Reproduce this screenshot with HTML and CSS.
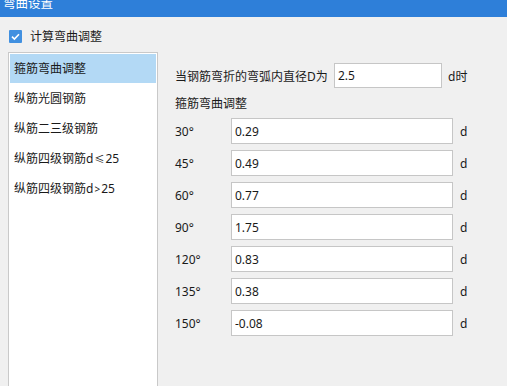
FILE: index.html
```html
<!DOCTYPE html>
<html>
<head>
<meta charset="utf-8">
<link rel="stylesheet" href="styles.css">
</head>
<body>
<div class="titlebar"><span class="title">弯曲设置</span></div>
<div class="check-row">
  <span class="checkbox"><svg width="13" height="13" viewBox="0 0 13 13"><path d="M3 6.6 L5.4 9 L10 4.2" fill="none" stroke="#fff" stroke-width="1.6"/></svg></span>
  <span class="check-label">计算弯曲调整</span>
</div>
<div class="main">
  <div class="list">
    <div class="item selected">箍筋弯曲调整</div>
    <div class="item">纵筋光圆钢筋</div>
    <div class="item">纵筋二三级钢筋</div>
    <div class="item">纵筋四级钢筋d<span class="op">≤</span>25</div>
    <div class="item">纵筋四级钢筋d<span class="op">&gt;</span>25</div>
  </div>
  <div class="panel">
    <div class="diam-row">
      <span class="diam-label">当钢筋弯折的弯弧内直径D为</span>
      <input class="field diam" value="2.5">
      <span class="unit">d时</span>
    </div>
    <div class="heading">箍筋弯曲调整</div>
    <div class="grid">
      <span class="angle">30°</span><input class="field" value="0.29"><span class="unit">d</span>
      <span class="angle">45°</span><input class="field" value="0.49"><span class="unit">d</span>
      <span class="angle">60°</span><input class="field" value="0.77"><span class="unit">d</span>
      <span class="angle">90°</span><input class="field" value="1.75"><span class="unit">d</span>
      <span class="angle">120°</span><input class="field" value="0.83"><span class="unit">d</span>
      <span class="angle">135°</span><input class="field" value="0.38"><span class="unit">d</span>
      <span class="angle">150°</span><input class="field" value="-0.08"><span class="unit">d</span>
    </div>
  </div>
</div>
</body>
</html>
```
FILE: styles.css
```css
html, body {
  margin: 0;
  padding: 0;
}
body {
  width: 507px;
  height: 386px;
  overflow: hidden;
  background: #f0f0f0;
  font-family: "Noto Sans", "Noto Sans CJK SC", sans-serif;
  font-size: 12px;
  color: #1a1a1a;
}
.titlebar {
  height: 17px;
  background: #2e7fd9;
  overflow: hidden;
  padding-left: 3px;
}
.title {
  display: block;
  color: #fff;
  font-size: 12.5px;
  line-height: 17px;
  margin-top: -5px;
}
.check-row {
  display: flex;
  align-items: center;
  height: 13px;
  margin-top: 13px;
  padding-left: 9px;
}
.checkbox {
  width: 13px;
  height: 13px;
  background: #4190e0;
  border-radius: 1px;
  display: flex;
}
.check-label {
  margin-left: 8px;
  line-height: 13px;
}
.main {
  display: flex;
  margin-top: 9px;
  padding-left: 8px;
}
.list {
  height: 340px;
  background: #fff;
  border: 1px solid #c9c9c9;
  padding: 1px;
  box-sizing: border-box;
  width: 150px;
}
.item {
  height: 30px;
  line-height: 30px;
  padding-left: 4px;
}
.item .op {
  font-size: 10px;
  margin: 0 1px;
}
.item.selected {
  background: #b3d9f5;
  height: 29px;
  line-height: 30px;
  margin-bottom: 1px;
}
.panel {
  margin-left: 17px;
  padding-top: 11px;
}
.diam-row {
  display: flex;
  align-items: center;
  height: 25px;
}
.diam-label {
  width: 159px;
}
.field {
  box-sizing: border-box;
  height: 26px;
  border: 1px solid #c6c6c6;
  background: #fff;
  font-family: "Noto Sans", "Noto Sans CJK SC", sans-serif;
  font-size: 12px;
  color: #1a1a1a;
  padding: 0 0 0 3px;
  margin: 0;
  outline: none;
  width: 222px;
}
.diam {
  width: 108px;
  height: 25px;
}
.unit {
  margin-left: 6px;
}
.heading {
  margin-top: 6px;
  line-height: 20px;
  height: 20px;
}
.grid {
  margin-top: 4px;
  display: grid;
  grid-template-columns: 56px 222px auto;
  row-gap: 6px;
  align-items: center;
}
.grid .unit {
  margin-left: 7px;
}
```
